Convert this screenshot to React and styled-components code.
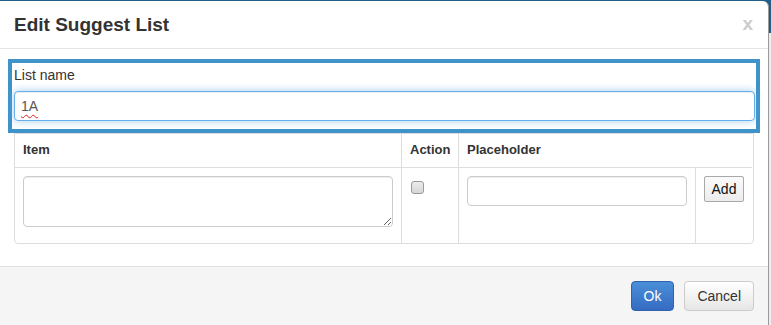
import React from "react";
import styled, { createGlobalStyle } from "styled-components";

const GlobalStyle = createGlobalStyle`
  html, body { margin: 0; padding: 0; background: #f2f2f2; }
  body { font-family: "Liberation Sans", Arial, Helvetica, sans-serif; font-size: 14px; color: #333; }
  * { box-sizing: border-box; }
`;

const Page = styled.div`
  display: flex;
  height: 325px;
  overflow: hidden;
  background: linear-gradient(#235e89 0, #235e89 33px, #eeeeee 33px);
`;

const Modal = styled.div`
  width: 769px;
  flex: none;
  margin-top: 1px;
  height: 330px;
  background: #fff;
  border-right: 1px solid #9a9a9a;
  border-radius: 0 6px 6px 0;
  display: flex;
  flex-direction: column;
  overflow: hidden;
`;

const Header = styled.div`
  height: 48px;
  padding: 0 14px;
  display: flex;
  align-items: center;
  justify-content: space-between;
  border-bottom: 1px solid #e5e5e5;
`;

const Title = styled.h4`
  margin: 0;
  font-size: 19px;
  font-weight: bold;
  color: #333;
  line-height: 22px;
`;

const Close = styled.span`
  font-size: 19px;
  font-weight: bold;
  color: #cccccc;
  margin-right: 1px;
  line-height: 1;
  margin-top: -2px;
`;

const Body = styled.div`
  padding: 10px 14px 22px;
`;

const Highlight = styled.div`
  margin: 0 -6px 0 -6px;
  border: 4px solid #3f93c9;
  padding: 2px 1px 8px 2px;
`;

const Label = styled.label`
  display: block;
  line-height: 20px;
  margin-bottom: 6px;
  color: #333;
`;

const NameField = styled.div`
  display: flex;
  align-items: center;
  width: 100%;
  height: 30px;
  padding: 0 6px;
  color: #555;
  background: #fff;
  border: 1px solid #66afe9;
  border-radius: 4px;
  box-shadow: inset 0 1px 1px rgba(0, 0, 0, 0.075), 0 0 8px rgba(102, 175, 233, 0.6);
`;

const Misspelled = styled.span`
  text-decoration: underline wavy #e02020;
  text-decoration-thickness: 1px;
  text-underline-offset: 3px;
`;

const Table = styled.div`
  display: grid;
  grid-template-columns: 386px 57px 237px 57px;
  border: 1px solid #dddddd;
  border-radius: 0 0 4px 4px;
`;

const HeadCell = styled.div`
  padding: 7px 8px 9px;
  line-height: 17px;
  font-weight: bold;
  font-size: 13px;
  color: #333;
  border-bottom: 1px solid #dddddd;
  border-left: ${(p) => (p.$first ? "none" : "1px solid #dddddd")};
  grid-column: ${(p) => (p.$span ? `span ${p.$span}` : "auto")};
`;

const Cell = styled.div`
  padding: 8px 8px 16px;
  border-left: ${(p) => (p.$first ? "none" : "1px solid #dddddd")};
`;

const TextArea = styled.textarea`
  display: block;
  width: 370px;
  height: 51px;
  border: 1px solid #cccccc;
  border-radius: 4px;
  box-shadow: inset 0 1px 1px rgba(0, 0, 0, 0.075);
  font: inherit;
  outline: none;
`;

const Check = styled.input`
  appearance: none;
  display: block;
  margin: 5px 0 0 1px;
  width: 13px;
  height: 13px;
  border: 1px solid #9a9a9a;
  border-radius: 3px;
  background: linear-gradient(#ececec, #d6d6d6);
`;

const TextInput = styled.input`
  display: block;
  width: 220px;
  height: 30px;
  border: 1px solid #cccccc;
  border-radius: 4px;
  box-shadow: inset 0 1px 1px rgba(0, 0, 0, 0.075);
  font: inherit;
  outline: none;
`;

const AddButton = styled.button`
  display: block;
  width: 40px;
  height: 26px;
  padding: 0;
  font: inherit;
  font-size: 14px;
  color: #111;
  background: linear-gradient(#fbfbfb, #ececec);
  border: 1px solid #a9a9a9;
  border-radius: 2px;
`;

const Footer = styled.div`
  flex: 1;
  background: #f5f5f5;
  border-top: 1px solid #e0e0e0;
  padding: 14px 14px 0;
  display: flex;
  justify-content: flex-end;
  align-items: flex-start;
  gap: 10px;
`;

const Button = styled.button`
  height: 30px;
  padding: 0 12px;
  font: inherit;
  font-size: 14px;
  border-radius: 4px;
  color: ${(p) => (p.$primary ? "#fff" : "#333")};
  background: ${(p) =>
    p.$primary
      ? "linear-gradient(#4a8ed8, #356cc2)"
      : "linear-gradient(#ffffff, #e6e6e6)"};
  border: 1px solid ${(p) => (p.$primary ? "#2f63ad" : "#cccccc")};
`;

export default function App() {
  return (
    <>
      <GlobalStyle />
      <Page>
        <Modal>
          <Header>
            <Title>Edit Suggest List</Title>
            <Close>x</Close>
          </Header>
          <Body>
            <Highlight>
              <Label>List name</Label>
              <NameField>
                <Misspelled>1A</Misspelled>
              </NameField>
            </Highlight>
            <Table>
              <HeadCell $first>Item</HeadCell>
              <HeadCell>Action</HeadCell>
              <HeadCell $span={2}>Placeholder</HeadCell>
              <Cell $first>
                <TextArea />
              </Cell>
              <Cell>
                <Check type="checkbox" />
              </Cell>
              <Cell>
                <TextInput />
              </Cell>
              <Cell>
                <AddButton>Add</AddButton>
              </Cell>
            </Table>
          </Body>
          <Footer>
            <Button $primary>Ok</Button>
            <Button>Cancel</Button>
          </Footer>
        </Modal>
      </Page>
    </>
  );
}
